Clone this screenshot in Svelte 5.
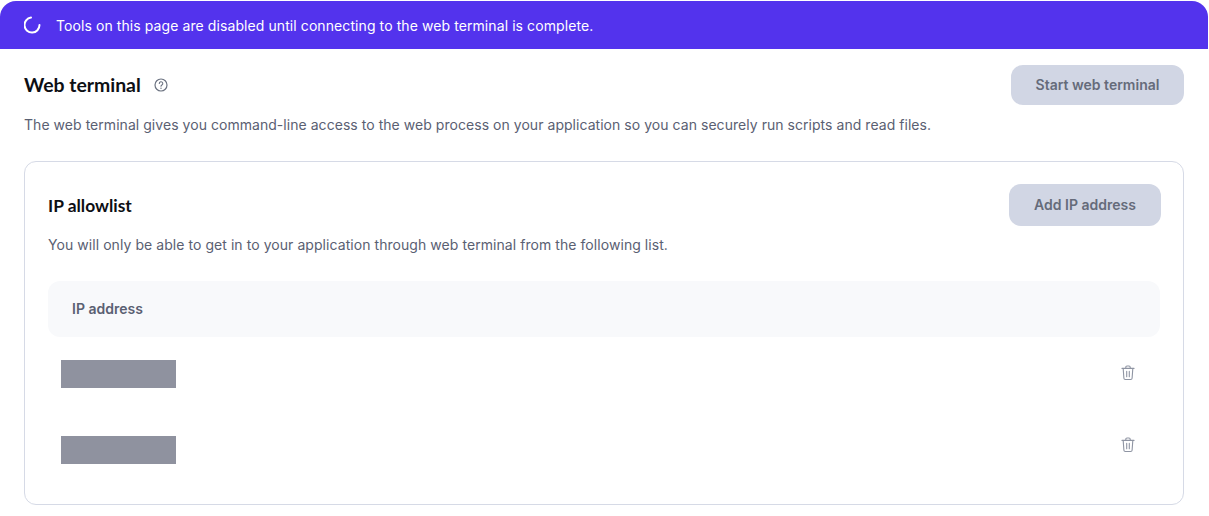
<script>
  const rows = [{ id: 1 }, { id: 2 }];
</script>

<div class="page">
  <div class="banner">
    <svg class="spinner" width="18" height="18" viewBox="0 0 18 18" fill="none">
      <path d="M7 1.6A7.5 7.5 0 1 0 15.5 9" stroke="#fff" stroke-width="2" stroke-linecap="round" />
    </svg>
    <span>Tools on this page are disabled until connecting to the web terminal is complete.</span>
  </div>

  <main>
    <div class="head">
      <div class="title">
        <h1>Web terminal</h1>
        <svg width="14" height="14" viewBox="0 0 14 14" fill="none">
          <circle cx="7" cy="7" r="6" stroke="#6b7280" stroke-width="1.2" />
          <path d="M5.3 5.5a1.75 1.75 0 1 1 2.6 1.5c-.6.35-.9.7-.9 1.3" stroke="#6b7280" stroke-width="1.1" stroke-linecap="round" />
          <circle cx="7" cy="10.2" r=".7" fill="#6b7280" />
        </svg>
      </div>
      <button class="start">Start web terminal</button>
    </div>
    <p class="desc">The web terminal gives you command-line access to the web process on your application so you can securely run scripts and read files.</p>

    <section class="card">
      <div class="card-head">
        <h2>IP allowlist</h2>
        <button class="add">Add IP address</button>
      </div>
      <p class="sub">You will only be able to get in to your application through web terminal from the following list.</p>

      <div class="table-head">IP address</div>
      {#each rows as row (row.id)}
        <div class="row">
          <div class="redact"></div>
          <svg class="trash" width="14" height="16" viewBox="0 0 14 16" fill="none" stroke="#8f95a3" stroke-width="1.1" stroke-linecap="round" stroke-linejoin="round">
            <path d="M1 3.4h12" />
            <path d="M4.8 3.2V2.2a1.2 1.2 0 0 1 1.2-1.2h2a1.2 1.2 0 0 1 1.2 1.2v1" />
            <path d="M2.2 3.6l.7 9.6a1.4 1.4 0 0 0 1.4 1.3h5.4a1.4 1.4 0 0 0 1.4-1.3l.7-9.6" />
            <path d="M5.7 6.4v5.4M8.3 6.4v5.4" />
          </svg>
        </div>
      {/each}
    </section>
  </main>
</div>

<style>
  :global(body) {
    background: #fff;
    font-family: Inter, "Liberation Sans", sans-serif;
    overflow: hidden;
  }

  .page {
    width: 1208px;
    height: 516px;
  }

  .banner {
    height: 48px;
    margin-top: 1px;
    padding-left: 24px;
    display: flex;
    align-items: center;
    gap: 14px;
    background: #5333ed;
    color: #fff;
    font-size: 14px;
    letter-spacing: 0.085px;
    border-radius: 16px 16px 0 0;
  }

  main {
    padding: 16px 24px 0;
  }

  .head {
    display: flex;
    justify-content: space-between;
    align-items: center;
  }

  .title {
    display: flex;
    align-items: center;
    gap: 13px;
  }

  h1,
  h2 {
    margin: 0;
    font-family: Lato, sans-serif;
    font-weight: 700;
    color: #0d0f14;
  }

  h1 {
    font-size: 19.4px;
    padding-bottom: 2px;
  }

  h2 {
    font-size: 17.4px;
  }

  button {
    border: 0;
    font-family: inherit;
    font-size: 14px;
    font-weight: 600;
    background: #d1d6e4;
    color: #656b7a;
    border-radius: 12px;
    padding: 0 0 2px;
  }

  .start {
    width: 173px;
    height: 40px;
  }

  .add {
    width: 152px;
    height: 42px;
  }

  .desc,
  .sub {
    margin: 0;
    font-size: 14px;
    line-height: 20px;
    color: #5a6072;
  }

  .desc {
    margin-top: 10px;
    letter-spacing: 0.043px;
  }

  .card {
    margin-top: 26px;
    height: 344px;
    box-sizing: border-box;
    padding: 22px 22px 0 23px;
    border: 1px solid #d6dae6;
    border-radius: 12px;
  }

  .card-head {
    display: flex;
    justify-content: space-between;
    align-items: center;
  }

  .sub {
    margin-top: 9px;
    letter-spacing: 0.06px;
  }

  .table-head {
    margin-top: 26px;
    margin-right: 1px;
    height: 56px;
    box-sizing: border-box;
    padding: 0 0 2px 24px;
    display: flex;
    align-items: center;
    background: #f8f9fb;
    border-radius: 12px;
    font-size: 14px;
    font-weight: 600;
    color: #5a6072;
  }

  .row {
    height: 76px;
    box-sizing: border-box;
    padding: 0 26px 2px 13px;
    display: flex;
    justify-content: space-between;
    align-items: center;
  }

  .redact {
    width: 115px;
    height: 28px;
    background: #8f929f;
  }

  .trash {
    margin-top: -2px;
  }

  .row:last-child .trash {
    margin-top: -10px;
  }
</style>
